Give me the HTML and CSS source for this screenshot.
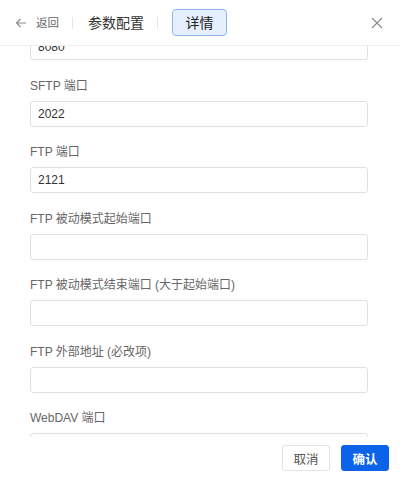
FILE: index.html
```html
<!DOCTYPE html>
<html lang="zh-CN">
<head>
<meta charset="utf-8">
<title>参数配置</title>
<link rel="stylesheet" href="styles.css">
</head>
<body>
<div class="panel">
  <header class="header">
    <div class="back">
      <svg class="back-icon" width="12" height="12" viewBox="0 0 12 12"><path d="M11 6H1.5M5.5 2L1.5 6l4 4" fill="none" stroke="#888" stroke-width="1.1"/></svg>
      <span class="back-text">返回</span>
    </div>
    <span class="divider"></span>
    <span class="crumb">参数配置</span>
    <span class="divider divider-2"></span>
    <span class="tab-active">详情</span>
    <svg class="close" width="12" height="12" viewBox="0 0 12 12"><path d="M1 1L11 11M11 1L1 11" stroke="#888" stroke-width="1.1"/></svg>
  </header>
  <main class="scroll">
    <div class="form">
      <div class="field"><label class="label">HTTP 端口</label><div class="input">8080</div></div>
      <div class="field"><label class="label">SFTP 端口</label><div class="input">2022</div></div>
      <div class="field"><label class="label">FTP 端口</label><div class="input">2121</div></div>
      <div class="field"><label class="label">FTP 被动模式起始端口</label><div class="input"></div></div>
      <div class="field"><label class="label">FTP 被动模式结束端口 (大于起始端口)</label><div class="input"></div></div>
      <div class="field"><label class="label">FTP 外部地址 (必改项)</label><div class="input"></div></div>
      <div class="field"><label class="label">WebDAV 端口</label><div class="input"></div></div>
    </div>
  </main>
  <footer class="footer">
    <button class="btn btn-cancel">取消</button>
    <button class="btn btn-ok">确认</button>
  </footer>
</div>
</body>
</html>
```
FILE: styles.css
```css
* { box-sizing: border-box; }
html, body { margin: 0; padding: 0; }
body {
  font-family: "Liberation Sans", Arial, "Noto Sans CJK SC", sans-serif;
  background: #fff;
  color: #333;
}
.panel {
  width: 400px;
  height: 477px;
  display: flex;
  flex-direction: column;
  overflow: hidden;
  position: relative;
}
.header {
  height: 46px;
  flex: none;
  display: flex;
  align-items: center;
  padding: 0 0 0 15px;
  border-bottom: 1px solid #efefef;
  background: #fff;
  position: relative;
  z-index: 2;
}
.back {
  display: flex;
  align-items: center;
  gap: 9px;
  font-size: 11.5px;
  line-height: 18px;
  color: #666;
}
.back-icon { display: block; flex: none; }
.back-text { white-space: nowrap; }
.divider {
  width: 1px;
  height: 12px;
  background: #e6e6e6;
  margin: 0 15px 0 13px;
}
.divider-2 { margin: 0 14px 0 13px; }
.crumb {
  font-size: 14px;
  line-height: 20px;
  color: #333;
  white-space: nowrap;
}
.tab-active {
  width: 55px;
  height: 27px;
  display: flex;
  align-items: center;
  justify-content: center;
  font-size: 14px;
  color: #222;
  background: #e6effd;
  border: 1px solid #8fb5f0;
  border-radius: 4px;
  margin-top: -1px;
}
.close {
  margin-left: auto;
  margin-right: 17px;
  display: block;
}
.scroll {
  flex: 1;
  overflow: hidden;
  position: relative;
}
.form {
  margin-top: -37px;
  padding: 0 32px 0 30px;
}
.field {
  margin-bottom: 15.5px;
}
.label {
  display: block;
  height: 20px;
  line-height: 20px;
  font-size: 12px;
  color: #666;
  margin-bottom: 5px;
}
.input {
  height: 26px;
  border: 1px solid #dfe0e6;
  border-radius: 3px;
  padding: 0 7px;
  font-size: 12px;
  line-height: 24px;
  color: #333;
}
.footer {
  position: absolute;
  left: 0;
  right: 0;
  bottom: 0;
  height: 40px;
  background: #fff;
  display: flex;
  justify-content: flex-end;
  align-items: flex-start;
  gap: 11px;
  padding: 8px 11px 0 0;
  z-index: 3;
}
.btn {
  width: 48px;
  height: 26px;
  border-radius: 3px;
  font-family: "Liberation Sans", Arial, "Noto Sans CJK SC", sans-serif;
  font-size: 12.5px;
  padding: 0;
  cursor: pointer;
}
.btn-cancel {
  background: #fff;
  border: 1px solid #e3e3e3;
  color: #555;
}
.btn-ok {
  background: #0a63e8;
  border: 1px solid #0a63e8;
  color: #fff;
  font-weight: 600;
}
```
